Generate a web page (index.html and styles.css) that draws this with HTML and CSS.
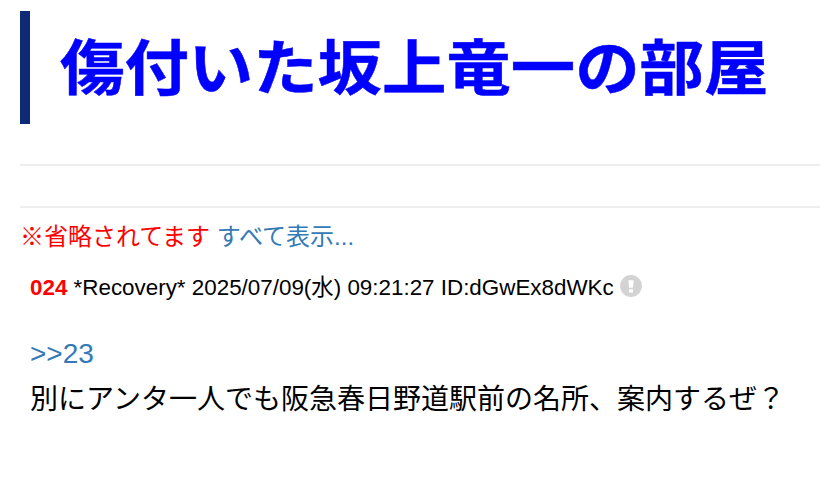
FILE: index.html
```html
<!DOCTYPE html>
<html lang="ja">
<head>
<meta charset="utf-8">
<title>傷付いた坂上竜一の部屋</title>
<link rel="stylesheet" href="styles.css">
</head>
<body>
<h1 class="title"><span class="title-text">傷付いた坂上竜一の部屋</span></h1>
<hr class="rule">
<hr class="rule">
<p class="omitted">※省略されてます <a href="#">すべて表示...</a></p>
<article class="post">
<div class="meta"><b class="number">024</b> *Recovery* 2025/07/09(水) 09:21:27 ID:dGwEx8dWKc <svg class="report" viewBox="0 0 22 22" aria-hidden="true"><circle cx="11" cy="11" r="10.9"/><path d="M8.4 5.2h5.2l-.6 7.6H9zM9 14.2h4v3.2H9z"/></svg></div>
<div class="body"><a href="#">&gt;&gt;23</a><p class="message">別にアンタ一人でも阪急春日野道駅前の名所、案内するぜ？</p></div>
</article>
</body>
</html>
```
FILE: styles.css
```css
body {
  margin: 0;
  padding: 11px 0 0 20px;
  height: 493px;
  box-sizing: border-box;
  overflow: hidden;
  background: #fff;
  color: #000;
  font-family: "Liberation Sans", "Noto Sans CJK JP", sans-serif;
}
a { color: #337ab7; text-decoration: none; }
.title {
  box-sizing: border-box;
  height: 113px;
  margin: 0;
  padding-left: 30px;
  border-left: 10px solid #0c2a75;
  color: #00f;
  font-size: 64.4px;
  line-height: 116px;
  white-space: nowrap;
}
.title-text {
  display: inline-block;
  transform: scaleY(.94);
  -webkit-text-stroke: .5px #00f;
}
.rule { margin: 40px 0 0; border: 0; border-top: 2px solid #eee; }
.omitted {
  margin: 12px 0 0;
  color: #f00;
  font-size: 24px;
  line-height: 34px;
  white-space: nowrap;
}
.post { margin: 18px 0 0 10px; white-space: nowrap; }
.meta { font-size: 22.4px; line-height: 32px; }
.number { color: #f00; }
.report { width: 22px; height: 22px; vertical-align: -2px; }
.report circle { fill: #d3d3d3; }
.report path { fill: #fff; }
.body { margin-top: 28px; font-size: 28px; line-height: 44px; }
.message { margin: 2px 0 0; }
```
